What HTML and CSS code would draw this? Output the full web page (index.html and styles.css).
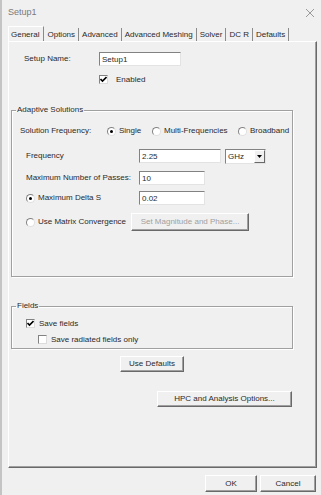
FILE: index.html
```html
<!DOCTYPE html>
<html>
<head>
<meta charset="utf-8">
<link rel="stylesheet" href="styles.css">
</head>
<body>
<div class="win">
  <div class="titlebar">
    <span class="title">Setup1</span>
    <svg class="close" width="10" height="10" viewBox="0 0 10 10"><path d="M1 1 L9 9 M9 1 L1 9" stroke="#9a9a9a" stroke-width="1" fill="none"/></svg>
  </div>
  <div class="tabs">
    <div class="tab sel">General</div>
    <div class="tab">Options</div>
    <div class="tab">Advanced</div>
    <div class="tab">Advanced Meshing</div>
    <div class="tab">Solver</div>
    <div class="tab">DC R</div>
    <div class="tab">Defaults</div>
  </div>
  <div class="panel">
    <div class="row name-row">
      <span class="name-label">Setup Name:</span>
      <div class="field name-field">Setup1</div>
    </div>
    <div class="row enabled-row">
      <span class="cb checked"><svg width="7" height="7" viewBox="0 0 7 7"><path d="M0.5 3 L2.5 5 L6.5 1" stroke="#000" stroke-width="1.6" fill="none"/></svg></span>
      <span class="cb-text">Enabled</span>
    </div>

    <fieldset class="group adaptive">
      <legend>Adaptive Solutions</legend>
      <div class="row sf-row">
        <span class="sf-label">Solution Frequency:</span>
        <span class="opt opt-single"><span class="radio on"></span>Single</span>
        <span class="opt opt-multi"><span class="radio"></span>Multi-Frequencies</span>
        <span class="opt"><span class="radio"></span>Broadband</span>
      </div>
      <div class="row frow r-freq">
        <span class="flabel">Frequency</span>
        <div class="field f-freq">2.25</div>
        <div class="select"><span class="sel-text">GHz</span><span class="sel-btn"><svg width="5" height="3" viewBox="0 0 5 3"><path d="M0 0 H5 L2.5 3 Z" fill="#000"/></svg></span></div>
      </div>
      <div class="row frow r-pass">
        <span class="flabel">Maximum Number of Passes:</span>
        <div class="field f-short">10</div>
      </div>
      <div class="row frow r-delta">
        <span class="flabel"><span class="radio on"></span>Maximum Delta S</span>
        <div class="field f-short">0.02</div>
      </div>
      <div class="row frow r-matrix">
        <span class="mlabel"><span class="radio"></span>Use Matrix Convergence</span>
        <div class="btn disabled b-mag">Set Magnitude and Phase...</div>
      </div>
    </fieldset>

    <fieldset class="group fields">
      <legend>Fields</legend>
      <div class="row save-row">
        <span class="cb checked"><svg width="7" height="7" viewBox="0 0 7 7"><path d="M0.5 3 L2.5 5 L6.5 1" stroke="#000" stroke-width="1.6" fill="none"/></svg></span>
        <span class="cb-text">Save fields</span>
      </div>
      <div class="row rad-row">
        <span class="cb"></span>
        <span class="cb-text">Save radiated fields only</span>
      </div>
    </fieldset>

    <div class="btn b-defaults">Use Defaults</div>
    <div class="btn b-hpc">HPC and Analysis Options...</div>
  </div>
  <div class="footer">
    <div class="btn b-ok">OK</div>
    <div class="btn b-cancel">Cancel</div>
  </div>
</div>
</body>
</html>
```

FILE: styles.css
```css
* { box-sizing: border-box; }
html, body { margin: 0; padding: 0; }
body {
  background: #f0f0f0;
  font-family: "Liberation Sans", Arial, sans-serif;
  font-size: 8px;
  line-height: 10px;
  color: #2a2a2a;
}
.win {
  width: 321px;
  height: 495px;
  border-left: 2px solid #c4c4c4;
  padding-left: 6px;
  overflow: hidden;
}
.titlebar {
  height: 26px;
  display: flex;
  align-items: flex-start;
  justify-content: space-between;
  padding-top: 7px;
}
.title {
  font-size: 9px;
  line-height: 10px;
  color: #7a7a7a;
}
.close { margin-right: 6px; margin-top: 1px; }

.tabs {
  display: flex;
  align-items: flex-end;
  height: 15px;
}
.tab {
  height: 13px;
  padding: 2px 3px 0 2px;
  border-right: 1px solid #8a8a8a;
  border-left: 1px solid transparent;
  white-space: nowrap;
}
.tab.sel {
  height: 15px;
  padding: 3px 4px 0 2px;
  border-left: 1px solid #fff;
  border-top: 1px solid #fff;
  border-right: 1px solid #8a8a8a;
  background: #f0f0f0;
}

.panel {
  width: 309px;
  height: 427px;
  border-top: 1px solid #fff;
  border-left: 1px solid #fff;
  border-right: 1px solid #696969;
  border-bottom: 1px solid #696969;
  box-shadow: inset -1px -1px 0 #a0a0a0;
  padding-top: 10px;
}

.row { display: flex; align-items: center; }

.field {
  height: 14px;
  background: #fff;
  border-top: 1px solid #828282;
  border-left: 1px solid #828282;
  border-right: 1px solid #e3e3e3;
  border-bottom: 1px solid #e3e3e3;
  padding: 1px 0 0 2px;
  line-height: 11px;
}

.name-row { height: 14px; }
.name-label { width: 90px; padding-left: 15px; }
.name-field { width: 82px; }

.enabled-row { margin-top: 8px; height: 11px; padding-left: 90px; }
.cb {
  width: 9px;
  height: 9px;
  background: #fff;
  border-top: 1px solid #828282;
  border-left: 1px solid #828282;
  border-right: 1px solid #dcdcdc;
  border-bottom: 1px solid #dcdcdc;
  display: flex;
  align-items: center;
  justify-content: center;
  flex: none;
}
.enabled-row .cb-text { margin-left: 8px; }

.group {
  margin: 0 0 0 2px;
  width: 282px;
  border: 1px solid #a0a0a0;
  box-shadow: 1px 1px 0 #fff, inset 1px 1px 0 #fff;
  padding: 0;
  min-width: 0;
}
.group legend {
  padding: 0 1px;
  margin-left: 4px;
  line-height: 10px;
}

.adaptive { margin-top: 20px; height: 172px; }
.sf-row { margin-top: 10px; height: 12px; padding-left: 8px; }
.sf-label { width: 87px; }
.opt { display: flex; align-items: center; }
.opt .radio { margin-right: 3px; }
.opt-single { width: 45px; }
.opt-multi { width: 86px; }

.radio {
  width: 9px;
  height: 9px;
  border-radius: 50%;
  background: #fff;
  border: 1px solid;
  border-color: #828282 #e0e0e0 #e0e0e0 #828282;
  display: inline-block;
  position: relative;
  flex: none;
}
.radio.on::after {
  content: "";
  position: absolute;
  left: 2px;
  top: 2px;
  width: 3px;
  height: 3px;
  border-radius: 50%;
  background: #000;
}

.frow { padding-left: 14px; }
.flabel { width: 113px; display: flex; align-items: center; }
.flabel .radio, .mlabel .radio { margin-right: 3px; }
.mlabel { width: 105px; display: flex; align-items: center; }

.r-freq { margin-top: 12px; height: 14px; }
.f-freq { width: 82px; }
.select {
  margin-left: 4px;
  width: 41px;
  height: 15px;
  background: #fff;
  border-top: 1px solid #828282;
  border-left: 1px solid #828282;
  border-right: 1px solid #e3e3e3;
  border-bottom: 1px solid #e3e3e3;
  display: flex;
  justify-content: space-between;
  align-items: stretch;
}
.sel-text { padding: 1px 0 0 2px; line-height: 11px; }
.sel-btn {
  width: 11px;
  background: #f0f0f0;
  border-top: 1px solid #fff;
  border-left: 1px solid #fff;
  border-right: 1px solid #696969;
  border-bottom: 1px solid #696969;
  display: flex;
  align-items: center;
  justify-content: center;
}

.r-pass { margin-top: 8px; height: 14px; }
.f-short { width: 66px; }
.r-delta { margin-top: 6px; height: 14px; }
.r-matrix { margin-top: 8px; height: 18px; }

.btn {
  background: #f0f0f0;
  border-top: 1px solid #fff;
  border-left: 1px solid #fff;
  border-right: 1px solid #696969;
  border-bottom: 1px solid #696969;
  box-shadow: inset -1px -1px 0 #a0a0a0;
  display: flex;
  align-items: center;
  justify-content: center;
  white-space: nowrap;
}
.btn.disabled { color: #a0a0a0; }
.b-mag { width: 118px; height: 18px; }

.fields { margin-top: 24px; height: 48px; }
.save-row { margin-top: 8px; height: 9px; padding-left: 14px; }
.rad-row { margin-top: 7px; height: 9px; padding-left: 26px; }
.fields .cb-text { margin-left: 4px; }

.b-defaults { margin: 7px 0 0 111px; width: 64px; height: 16px; }
.b-hpc { margin: 19px 0 0 148px; width: 135px; height: 16px; }

.footer {
  display: flex;
  margin-top: 7px;
  padding-left: 197px;
  gap: 3px;
}
.b-ok { width: 52px; height: 17px; }
.b-cancel { width: 56px; height: 17px; }
```
